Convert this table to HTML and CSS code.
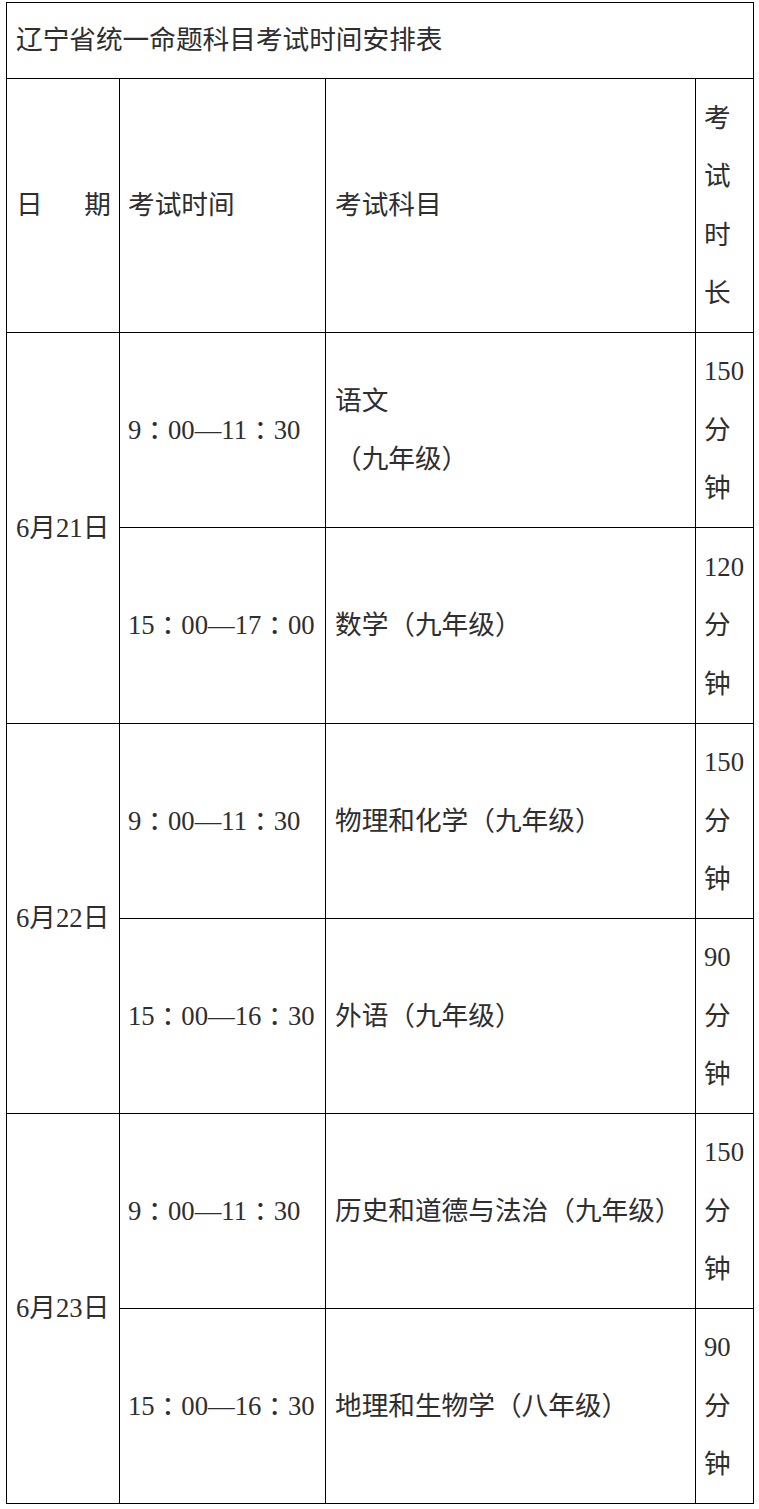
FILE: index.html
```html
<!DOCTYPE html>
<html lang="zh-CN">
<head>
<meta charset="utf-8">
<title>辽宁省统一命题科目考试时间安排表</title>
<link rel="stylesheet" href="styles.css">
</head>
<body>
<div class="sheet">
  <div class="cell title">辽宁省统一命题科目考试时间安排表</div>

  <div class="cell head date-head"><span>日</span><span>期</span></div>
  <div class="cell head time">考试时间</div>
  <div class="cell head">考试科目</div>
  <div class="cell head dur">考<br>试<br>时<br>长</div>

  <div class="cell date span2">6月21日</div>
  <div class="cell time">9<span class="colon">：</span>00—11<span class="colon">：</span>30</div>
  <div class="cell">语文<br>（九年级）</div>
  <div class="cell dur">150<br>分<br>钟</div>
  <div class="cell time">15<span class="colon">：</span>00—17<span class="colon">：</span>00</div>
  <div class="cell">数学（九年级）</div>
  <div class="cell dur">120<br>分<br>钟</div>

  <div class="cell date span2">6月22日</div>
  <div class="cell time">9<span class="colon">：</span>00—11<span class="colon">：</span>30</div>
  <div class="cell">物理和化学（九年级）</div>
  <div class="cell dur">150<br>分<br>钟</div>
  <div class="cell time">15<span class="colon">：</span>00—16<span class="colon">：</span>30</div>
  <div class="cell">外语（九年级）</div>
  <div class="cell dur">90<br>分<br>钟</div>

  <div class="cell date span2">6月23日</div>
  <div class="cell time">9<span class="colon">：</span>00—11<span class="colon">：</span>30</div>
  <div class="cell">历史和道德与法治（九年级）</div>
  <div class="cell dur">150<br>分<br>钟</div>
  <div class="cell time">15<span class="colon">：</span>00—16<span class="colon">：</span>30</div>
  <div class="cell">地理和生物学（八年级）</div>
  <div class="cell dur">90<br>分<br>钟</div>
</div>
</body>
</html>
```

FILE: styles.css
```css
html, body {
  margin: 0;
  padding: 0;
  background: #ffffff;
}

body {
  padding: 2px 0 0 6px;
}

.sheet {
  display: grid;
  grid-template-columns: 112px 205px 369px 57px;
  grid-template-rows: 75px 253px 194px 195px 194px 194px 194px 194px;
  gap: 1px;
  padding: 1px;
  width: 748px;
  box-sizing: border-box;
  background: #000000;
  font-family: "Liberation Serif", "Noto Sans CJK SC", serif;
  font-size: 26.67px;
  line-height: 58.5px;
  color: #2e2e2e;
}

.cell {
  background: #ffffff;
  display: flex;
  align-items: center;
  padding: 0 6px 0 9px;
  white-space: nowrap;
}

.title {
  grid-column: 1 / span 4;
}

.date-head {
  justify-content: space-between;
  padding-right: 8px;
}

.time {
  padding-left: 8px;
  padding-right: 0;
}

.colon {
  display: inline-block;
  width: 1em;
  text-align: center;
  font-feature-settings: "halt" 1;
}

.dur {
  padding-left: 8px;
  padding-right: 0;
}

.span2 {
  grid-row: span 2;
}

.date {
  padding-left: 9px;
}
```
